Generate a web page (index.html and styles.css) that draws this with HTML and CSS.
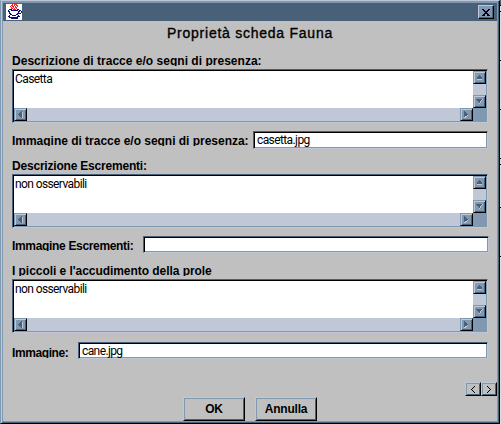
FILE: index.html
```html
<!DOCTYPE html>
<html lang="it">
<head>
<meta charset="utf-8">
<title>Proprietà scheda Fauna</title>
<link rel="stylesheet" href="styles.css">
</head>
<body>
<svg class="defs" width="0" height="0">
  <symbol id="up" viewBox="0 0 7 5"><path stroke="#486078" d="M3 .5h1M2 1.5h3M1 2.5h5M1 3.5h5"/><path stroke="#c0c8d8" d="M1 4.5h5"/></symbol>
  <symbol id="down" viewBox="0 0 7 5"><path stroke="#486078" d="M0 .5h6M1 1.5h4M2 2.5h2M3 3.5h1"/><path stroke="#c0c8d8" d="M5 1.5h1M4 2.5h1M4 3.5h1M3 4.5h1M6 .5h1"/></symbol>
  <symbol id="left" viewBox="0 0 5 7"><path stroke="#486078" d="M3 .5h1M2 1.5h2M1 2.5h3M0 3.5h4M1 4.5h3M2 5.5h2M3 6.5h1"/><path stroke="#c0c8d8" d="M4.500 1v6"/></symbol>
  <symbol id="right" viewBox="0 0 5 7"><path stroke="#486078" d="M0 .5h1M0 1.5h2M0 2.5h3M0 3.5h4M0 4.5h3M0 5.5h1"/><path stroke="#c0c8d8" d="M3 4.5h1M1 5.5h2M0 6.5h2"/></symbol>
</svg>
<div class="window">
  <header class="titlebar">
    <svg class="java" viewBox="0 0 16 16" width="16" height="16">
      <path fill="#fff" d="M0 0h16v16H0z"/>
      <path stroke="#f22" d="M6 .5h1M8 .5h3M5 1.5h2M8 1.5h1M10 1.5h2M4 2.5h1M6 2.5h2M9 2.5h1M11 2.5h1M5 3.5h1M7 3.5h1M9 3.5h2M5 4.5h2M8 4.5h1M10 4.5h1M7 5.5h3"/>
      <path stroke="#0a0a88" d="M3 5.5h3M11 5.5h2M2 6.5h1M5 6.5h7M13 6.5h2M2 7.5h2M12 7.5h2M15 7.5h1M3 8.5h1M12 8.5h1M15 8.5h1M3 9.5h2M11 9.5h4M4 10.5h2M10 10.5h2M3 11.5h1M6 11.5h4M12 11.5h1M2 12.5h2M11 12.5h3M3 13.5h9M5 14.5h7"/>
    </svg>
    <button class="close" aria-label="Chiudi">
      <svg viewBox="0 0 8 7" width="8" height="7"><path stroke="#000010" d="M0 .5h2M6 .5h2M1 1.5h2M5 1.5h2M2 2.5h4M3 3.5h2M2 4.5h4M1 5.5h2M5 5.5h2M0 6.5h3M5 6.5h3"/></svg>
    </button>
  </header>
  <main class="form">
    <h1 class="heading">Proprietà scheda Fauna</h1>

    <label class="label first">Descrizione di tracce e/o segni di presenza:</label>
    <div class="area">
      <div class="text">Casetta</div>
      <div class="vbar"><i class="arrow"><svg width="7" height="5"><use href="#up"/></svg></i><i class="arrow"><svg width="7" height="5"><use href="#down"/></svg></i></div>
      <div class="hbar"><i class="arrow"><svg width="5" height="7"><use href="#left"/></svg></i><i class="arrow"><svg width="5" height="7"><use href="#right"/></svg></i></div>
    </div>
    <div class="row row-tracce">
      <label class="label">Immagine di tracce e/o segni di presenza:</label>
      <div class="input">casetta.jpg</div>
    </div>

    <label class="label l-escr">Descrizione Escrementi:</label>
    <div class="area">
      <div class="text">non osservabili</div>
      <div class="vbar"><i class="arrow"><svg width="7" height="5"><use href="#up"/></svg></i><i class="arrow"><svg width="7" height="5"><use href="#down"/></svg></i></div>
      <div class="hbar"><i class="arrow"><svg width="5" height="7"><use href="#left"/></svg></i><i class="arrow"><svg width="5" height="7"><use href="#right"/></svg></i></div>
    </div>
    <div class="row row-escr">
      <label class="label">Immagine Escrementi:</label>
      <div class="input"></div>
    </div>

    <label class="label l-prole">I piccoli e l'accudimento della prole</label>
    <div class="area">
      <div class="text">non osservabili</div>
      <div class="vbar"><i class="arrow"><svg width="7" height="5"><use href="#up"/></svg></i><i class="arrow"><svg width="7" height="5"><use href="#down"/></svg></i></div>
      <div class="hbar"><i class="arrow"><svg width="5" height="7"><use href="#left"/></svg></i><i class="arrow"><svg width="5" height="7"><use href="#right"/></svg></i></div>
    </div>
    <div class="row row-prole">
      <label class="label">Immagine:</label>
      <div class="input">cane.jpg</div>
    </div>

    <nav class="pager">
      <button class="button step" aria-label="Precedente"><svg viewBox="0 0 4 7" width="4" height="7"><path stroke="#000" d="M3 .5h1M2 1.5h1M1 2.5h1M0 3.5h1M1 4.5h1M2 5.5h1M3 6.5h1"/></svg></button>
      <button class="button step" aria-label="Successivo"><svg viewBox="0 0 4 7" width="4" height="7"><path stroke="#000" d="M0 .5h1M1 1.5h1M2 2.5h1M3 3.5h1M2 4.5h1M1 5.5h1M0 6.5h1"/></svg></button>
    </nav>
    <footer class="actions">
      <button class="button">OK</button>
      <button class="button">Annulla</button>
    </footer>
  </main>
</div>
<svg class="behind" width="1" height="424" viewBox="0 0 1 424"><path fill="#486078" d="M0 0h1v5H0z"/><path stroke="#000" d="M0 5.500h1M0 11.500h1M0 60.500h1M0 109.500h1M0 158.500h1M0 164.500h1M0 207.500h1M0 256.500h1"/></svg>
</body>
</html>
```
FILE: styles.css
```css
* { box-sizing: border-box; }
body {
  margin: 0;
  width: 501px;
  height: 424px;
  overflow: hidden;
  display: flex;
  background: #c0c0c0;
  font: 12px "Liberation Sans", Arial, sans-serif;
  color: #000;
}
button { font: inherit; padding: 0; margin: 0; color: inherit; }
svg { display: block; shape-rendering: crispEdges; }
.defs { position: absolute; }

.window {
  flex: none;
  width: 500px;
  height: 424px;
  background: #c0c0c0;
  border-top: 1px solid #c0c8d8;
  border-left: 1px solid #8098b0;
  border-right: 1px solid #000;
  border-bottom: 1px solid #000;
  box-shadow: inset 1px 0 #c0c8d8, inset -1px -1px #486078, inset 2px 2px #8098b0, inset -2px -2px #8098b0;
  padding: 2px;
}
.behind { flex: none; background: #dcdcdc; }
.titlebar {
  height: 18px;
  padding: 0 3px;
  background: #486078;
  display: flex;
  align-items: center;
  justify-content: space-between;
}
.close {
  width: 16px;
  height: 14px;
  background: #8098b0;
  border: 1px solid;
  border-color: #c0c8d8 #000 #000 #c0c8d8;
  box-shadow: inset -1px -1px #486078;
  display: flex;
  align-items: center;
  justify-content: center;
}
.form {
  padding-left: 9px;
  display: flex;
  flex-direction: column;
}
.heading {
  margin: 3px 0 0;
  width: 476px;
  height: 18px;
  line-height: 18px;
  text-align: center;
  font-size: 14px;
  font-weight: 400;
  letter-spacing: .75px;
  -webkit-text-stroke: .35px #000;
}
.label {
  display: block;
  height: 12px;
  line-height: 14px;
  overflow: hidden;
  white-space: nowrap;
  font-weight: 700;
  font-size: 12px;
  letter-spacing: -.05px;
}
.first { margin: 12px 0 3px; letter-spacing: .02px; }
.l-escr { margin: 10px 0 3px; letter-spacing: -.2px; }
.l-prole { margin: 11px 0 3px; }

.area {
  width: 476px;
  height: 54px;
  display: grid;
  grid-template: 37px 13px / 459px 13px;
  border: 1px solid;
  border-color: #486078 #c0c8d8 #c0c8d8 #486078;
  background: #8098b0;
  padding: 1px;
  box-shadow: inset 1px 1px #000, inset -1px -1px #8098b0;
}
.text, .input { font: 12px/15px Roboto, sans-serif; letter-spacing: -.6px; }
.text { background: #fff; padding: 1px; }
.vbar, .hbar { background: #c0c8d8; display: flex; justify-content: space-between; }
.vbar { flex-direction: column; }
.arrow {
  width: 13px;
  height: 13px;
  background: #8098b0;
  border: 1px solid;
  border-color: #8098b0 #000 #000 #8098b0;
  box-shadow: inset 1px 1px #c0c8d8, inset -1px -1px #486078;
  display: flex;
  align-items: center;
  justify-content: center;
}

.row { display: flex; width: 476px; }
.row .label { flex: none; margin-top: 3px; }
.input {
  flex: 1;
  height: 17px;
  border: 1px solid;
  border-color: #486078 #c0c8d8 #c0c8d8 #486078;
  background: #fff;
  box-shadow: inset 1px 1px #000, inset -1px -1px #8098b0;
  padding: 1px 3px;
}
.row-tracce { margin-top: 8px; }
.row-tracce .label { width: 241px; letter-spacing: -.02px; }
.row-tracce .input { height: 18px; }
.row-escr { margin-top: 8px; width: 477px; }
.row-escr .label { width: 131px; letter-spacing: -.33px; }
.row-prole { margin-top: 9px; }
.row-prole .label { width: 66px; margin-top: 4px; letter-spacing: -.4px; }

.button {
  width: 62px;
  height: 24px;
  background: #c0c0c0;
  border: 1px solid;
  border-color: #c0c8d8 #000 #000 #c0c8d8;
  box-shadow: inset 1px 1px #8098b0, inset -1px -1px #486078;
  font-weight: 700;
  letter-spacing: -.2px;
  display: flex;
  align-items: center;
  justify-content: center;
}
.pager { display: flex; margin: 23px 0 0 453px; }
.step { width: 16px; height: 14px; }
.actions { display: flex; gap: 10px; margin: 1px 0 0 171px; }
.actions .button { padding-bottom: 1px; }
```
